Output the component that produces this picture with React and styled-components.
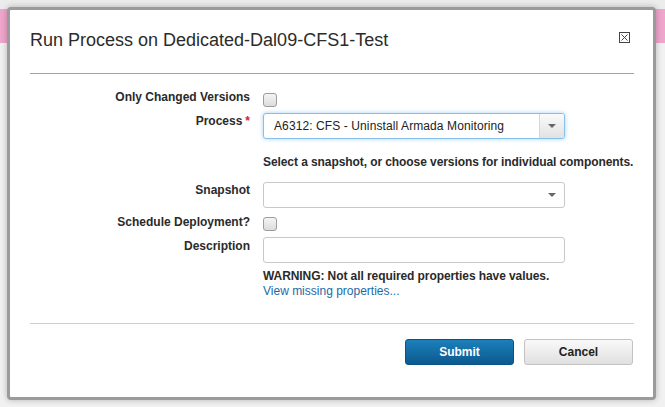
import React from "react";
import styled, { createGlobalStyle } from "styled-components";

const GlobalStyle = createGlobalStyle`
  html, body {
    margin: 0;
    padding: 0;
  }
  body {
    font-family: "Liberation Sans", Arial, sans-serif;
    color: #222;
    height: 407px;
    overflow: hidden;
    background: linear-gradient(
      to bottom,
      #ececec 0px,
      #ececec 9px,
      #f0a6cc 9px,
      #f0a6cc 43px,
      #f1f1f1 43px,
      #f1f1f1 100%
    );
  }
`;

const Dialog = styled.div`
  box-sizing: border-box;
  margin: 7px 0 0 7px;
  width: 649px;
  height: 393px;
  background: #fff;
  border: 3px solid #9b9b9b;
  border-radius: 4px;
  box-shadow: 0 0 6px rgba(0, 0, 0, 0.25);
  display: flex;
  flex-direction: column;
`;

const Header = styled.div`
  display: flex;
  justify-content: space-between;
  align-items: flex-start;
  padding: 19px 20px 0;
`;

const Title = styled.h1`
  margin: 0;
  font-size: 18px;
  line-height: 22px;
  font-weight: normal;
  color: #2b2b2b;
`;

const CloseButton = styled.button`
  border: none;
  background: none;
  padding: 0;
  margin: 3px 3px 0 0;
  width: 11px;
  height: 11px;
  display: block;
  cursor: pointer;
  svg {
    display: block;
  }
`;

const Rule = styled.hr`
  border: none;
  border-top: 1px solid ${(p) => p.$color || "#a3a3a3"};
  margin: ${(p) => p.$margin};
`;

const Form = styled.div`
  padding: 16px 20px 0;
  display: flex;
  flex-direction: column;
`;

const Row = styled.div`
  display: grid;
  grid-template-columns: 220px 1fr;
  column-gap: 13px;
  align-items: start;
  margin-top: ${(p) => p.$top || 0}px;
`;

const Label = styled.label`
  text-align: right;
  font-size: 12px;
  line-height: 15px;
  font-weight: bold;
  color: #2a2a2a;
  padding-top: ${(p) => p.$pad || 0}px;
  white-space: nowrap;
`;

const Required = styled.span`
  color: #d0223a;
  margin-left: 3px;
`;

const Checkbox = styled.input.attrs({ type: "checkbox" })`
  appearance: none;
  display: block;
  margin: ${(p) => p.$top || 0}px 0 0 0;
  width: 14px;
  height: 14px;
  box-sizing: border-box;
  border: 1px solid #9d9d9d;
  border-radius: 3px;
  background: linear-gradient(to bottom, #f4f4f4, #dcdcdc);
`;

const Select = styled.div`
  box-sizing: border-box;
  width: 302px;
  height: 26px;
  display: flex;
  align-items: center;
  border: 1px solid ${(p) => (p.$focus ? "#86bfe9" : "#c8c8c8")};
  border-radius: 3px;
  background: #fff;
  box-shadow: ${(p) =>
    p.$focus ? "0 0 4px rgba(90, 170, 235, 0.55)" : "none"};
  font-size: 12px;
  color: #222;
  overflow: hidden;
`;

const SelectValue = styled.span`
  flex: 1;
  padding-left: 10px;
  white-space: nowrap;
  letter-spacing: 0.1px;
`;

const Arrow = styled.span`
  width: 24px;
  align-self: stretch;
  display: flex;
  align-items: center;
  justify-content: center;
  border-left: 1px solid ${(p) => (p.$shaded ? "#d6d6d6" : "transparent")};
  background: ${(p) =>
    p.$shaded ? "linear-gradient(to bottom, #fafafa, #e2e2e2)" : "none"};
  &::after {
    content: "";
    border-left: 4px solid transparent;
    border-right: 4px solid transparent;
    border-top: 4px solid #666;
  }
`;

const TextInput = styled.input`
  display: block;
  box-sizing: border-box;
  width: 302px;
  height: 26px;
  border: 1px solid #c8c8c8;
  border-radius: 3px;
  margin: 0;
`;

const Help = styled.div`
  font-size: 12px;
  line-height: 15px;
  font-weight: bold;
  color: #2a2a2a;
  white-space: nowrap;
  letter-spacing: -0.08px;
`;

const Link = styled.a`
  display: block;
  font-size: 12px;
  line-height: 15px;
  color: #1b6aa6;
  text-decoration: none;
`;

const Footer = styled.div`
  display: flex;
  justify-content: flex-end;
  gap: 10px;
  padding: 15px 20px 0;
`;

const Button = styled.button`
  box-sizing: border-box;
  width: 109px;
  height: 26px;
  border-radius: 3px;
  font-family: inherit;
  font-size: 12px;
  font-weight: bold;
  border: 1px solid ${(p) => (p.$primary ? "#0b5384" : "#c3c3c3")};
  color: ${(p) => (p.$primary ? "#fff" : "#222")};
  background: ${(p) =>
    p.$primary
      ? "linear-gradient(to bottom, #1d7fba, #0b5a8f)"
      : "linear-gradient(to bottom, #f9f9f9, #e0e0e0)"};
  cursor: pointer;
`;

function CloseIcon() {
  return (
    <svg width="11" height="11" viewBox="0 0 11 11">
      <rect x="0.5" y="0.5" width="10" height="10" fill="none" stroke="#444" />
      <path d="M2.5 2.5 L8.5 8.5 M8.5 2.5 L2.5 8.5" stroke="#444" strokeWidth="1" />
    </svg>
  );
}

export default function App() {
  return (
    <>
      <GlobalStyle />
      <Dialog>
        <Header>
          <Title>Run Process on Dedicated-Dal09-CFS1-Test</Title>
          <CloseButton aria-label="Close">
            <CloseIcon />
          </CloseButton>
        </Header>
        <Rule $margin="22px 19px 0 20px" />
        <Form>
          <Row>
            <Label>Only Changed Versions</Label>
            <Checkbox $top={3} />
          </Row>
          <Row $top={6}>
            <Label $pad={1}>
              Process<Required>*</Required>
            </Label>
            <Select $focus>
              <SelectValue>A6312: CFS - Uninstall Armada Monitoring</SelectValue>
              <Arrow $shaded />
            </Select>
          </Row>
          <Row $top={16}>
            <span />
            <Help>Select a snapshot, or choose versions for individual components.</Help>
          </Row>
          <Row $top={12}>
            <Label $pad={1}>Snapshot</Label>
            <Select>
              <SelectValue />
              <Arrow />
            </Select>
          </Row>
          <Row $top={7}>
            <Label>Schedule Deployment?</Label>
            <Checkbox $top={2} />
          </Row>
          <Row $top={6}>
            <Label $pad={2}>Description</Label>
            <TextInput />
          </Row>
          <Row $top={6}>
            <span />
            <div>
              <Help>WARNING: Not all required properties have values.</Help>
              <Link href="#">View missing properties...</Link>
            </div>
          </Row>
        </Form>
        <Rule $color="#cfcfcf" $margin="24px 19px 0 20px" />
        <Footer>
          <Button $primary>Submit</Button>
          <Button>Cancel</Button>
        </Footer>
      </Dialog>
    </>
  );
}
